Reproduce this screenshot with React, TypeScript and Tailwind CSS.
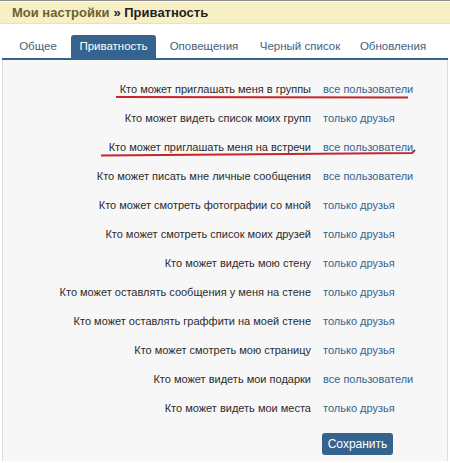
import React from "react";

const tabs: { label: string; cls: string }[] = [
  { label: "Общее", cls: "w-[52px] ml-[10px]" },
  { label: "Приватность", cls: "w-[85px] ml-[7px]" },
  { label: "Оповещения", cls: "w-[84px] ml-[6px]" },
  { label: "Черный список", cls: "w-[94px] ml-[7px]" },
  { label: "Обновления", cls: "w-[80px] ml-[6px]" },
];

const rows: [string, string][] = [
  ["Кто может приглашать меня в группы", "все пользователи"],
  ["Кто может видеть список моих групп", "только друзья"],
  ["Кто может приглашать меня на встречи", "все пользователи"],
  ["Кто может писать мне личные сообщения", "все пользователи"],
  ["Кто может смотреть фотографии со мной", "только друзья"],
  ["Кто может смотреть список моих друзей", "только друзья"],
  ["Кто может видеть мою стену", "только друзья"],
  ["Кто может оставлять сообщения у меня на стене", "только друзья"],
  ["Кто может оставлять граффити на моей стене", "только друзья"],
  ["Кто может смотреть мою страницу", "только друзья"],
  ["Кто может видеть мои подарки", "все пользователи"],
  ["Кто может видеть мои места", "только друзья"],
];

export default function App() {
  return (
    <div className="relative w-[450px] h-[463px] overflow-hidden bg-white font-['Liberation_Sans',Arial,sans-serif] text-[11px]">
      <div className="h-px bg-[#8c8c8c]" />
      {/* header */}
      <div className="mt-px h-[22px] bg-[#f7f0c6] border-b border-[#ece3b0] flex items-center pl-[12px] text-[13px] font-bold">
        <span className="text-[#6a6234]">Мои настройки</span>
        <span className="text-[#222] ml-[4px]">» Приватность</span>
      </div>

      {/* tabs */}
      <div className="mt-[12px] mx-[2px] flex items-end h-[24px] border-b-2 border-[#36638e] text-[11.5px]">
        {tabs.map((t) => (
          <div
            key={t.label}
            className={
              t.label === "Приватность"
                ? `${t.cls} h-[23px] whitespace-nowrap rounded-t-[3px] bg-[#36638e] text-white flex items-center justify-center`
                : `${t.cls} h-[23px] whitespace-nowrap text-[#47607b] flex items-center justify-center`
            }
          >
            {t.label}
          </div>
        ))}
      </div>

      {/* content */}
      <div className="mx-[2px] border-l border-r border-[#dcdcdc] bg-[#f7f7f7] h-[401px] pt-[15px]">
        {rows.map(([label, value]) => (
          <div key={label} className="grid grid-cols-[308px_1fr] h-[29px] items-center">
            <div className="text-right text-[#2b2b2b]">{label}</div>
            <div className="pl-[12px] text-[#36638e]">{value}</div>
          </div>
        ))}
        <div className="mt-[10px] pl-[319px]">
          <button className="h-[22px] w-[71px] rounded-[3px] bg-[#36638e] text-white text-[12px]">
            Сохранить
          </button>
        </div>
      </div>

      {/* hand-drawn red underlines */}
      <svg className="absolute left-0 top-0 pointer-events-none" width="450" height="463">
        <path d="M116 97 L408 97.5" stroke="#c8242c" strokeWidth="2" fill="none" />
        <path d="M101 155.5 L412 153 L415 150" stroke="#c8242c" strokeWidth="2" fill="none" />
      </svg>
    </div>
  );
}
